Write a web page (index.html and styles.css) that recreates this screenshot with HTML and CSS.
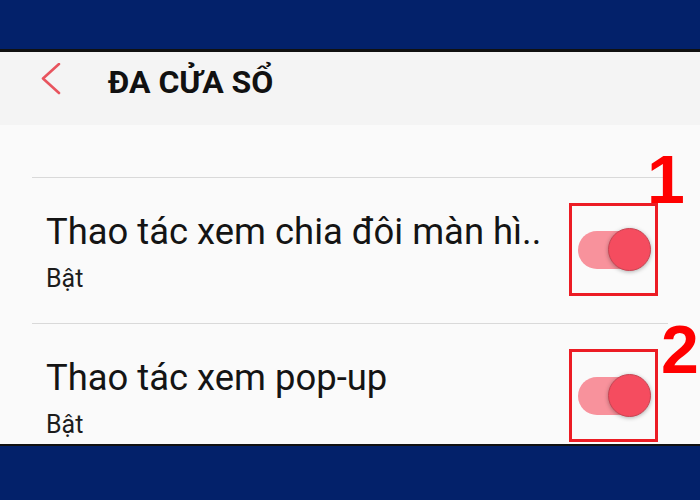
FILE: index.html
```html
<!DOCTYPE html>
<html lang="vi">
<head>
<meta charset="utf-8">
<title>Đa cửa sổ</title>
<link rel="stylesheet" href="styles.css">
</head>
<body>
<div class="screen">
  <div class="topbar"></div>
  <header class="header">
    <svg class="back" width="20" height="32" viewBox="0 0 20 32" aria-hidden="true">
      <polyline points="18,1 2,15.5 18,30" fill="none" stroke="#e8545e" stroke-width="2.6" stroke-linecap="round" stroke-linejoin="round"/>
    </svg>
    <h1 class="title">ĐA CỬA SỔ</h1>
  </header>
  <main class="content">
    <div class="row">
      <div class="text">
        <div class="label">Thao tác xem chia đôi màn hì..</div>
        <div class="sub">Bật</div>
      </div>
      <div class="mark">
        <div class="toggle"><span class="track"></span><span class="thumb"></span></div>
        <span class="num num1">1</span>
      </div>
    </div>
    <div class="row">
      <div class="text">
        <div class="label">Thao tác xem pop-up</div>
        <div class="sub">Bật</div>
      </div>
      <div class="mark">
        <div class="toggle"><span class="track"></span><span class="thumb"></span></div>
        <span class="num num2">2</span>
      </div>
    </div>
  </main>
  <div class="bottombar"></div>
</div>
</body>
</html>
```

FILE: styles.css
```css
* { box-sizing: border-box; }
html, body { margin: 0; padding: 0; }
body { width: 700px; height: 500px; overflow: hidden; background: #03216a; font-family: Roboto, "Noto Sans", sans-serif; }
.screen { width: 700px; height: 500px; display: flex; flex-direction: column; }
.topbar { height: 52px; background: #03216a; border-bottom: 3px solid #111; flex: none; }
.header { height: 73px; background: #f4f4f4; flex: none; display: flex; align-items: flex-start; padding: 12px 0 0 41px; }
.back { display: block; flex: none; margin-top: -1px; }
.title { margin: 0 0 0 47px; font-family: Roboto, sans-serif; font-weight: 700; font-size: 32px; line-height: 36px; color: #111; letter-spacing: 0; }
.content { height: 319px; flex: none; background: #fafafa; padding: 52px 32px 0; overflow: hidden; }
.row { height: 146px; border-top: 1px solid #d9d9d9; display: flex; justify-content: space-between; align-items: flex-start; padding-left: 14px; padding-right: 10px; }
.text { padding-top: 32px; }
.label { font-size: 36.4px; line-height: 44px; color: #141414; }
.sub { margin-top: 10px; font-size: 25px; line-height: 30px; color: #1c1c1c; }
.mark { position: relative; margin-top: 25px; width: 89px; height: 93px; border: 3px solid #ec1c24; display: flex; align-items: center; padding-left: 6px; }
.toggle { display: flex; align-items: center; }
.track { display: block; width: 64px; height: 38px; border-radius: 19px; background: #f8929c; }
.thumb { display: block; width: 43px; height: 43px; margin-left: -34px; border-radius: 50%; background: #f54c5f; border: 1px solid #c94453; box-shadow: 0 1px 4px rgba(0,0,0,0.3); }
.num { position: absolute; font-family: "Liberation Sans", Arial, sans-serif; font-weight: 700; font-size: 68px; line-height: 1; color: #ff0000; }
.num1 { left: 75px; top: -61px; }
.num2 { left: 89px; top: -37px; }
.bottombar { flex: 1; background: #03216a; border-top: 2px solid #111; }
```
